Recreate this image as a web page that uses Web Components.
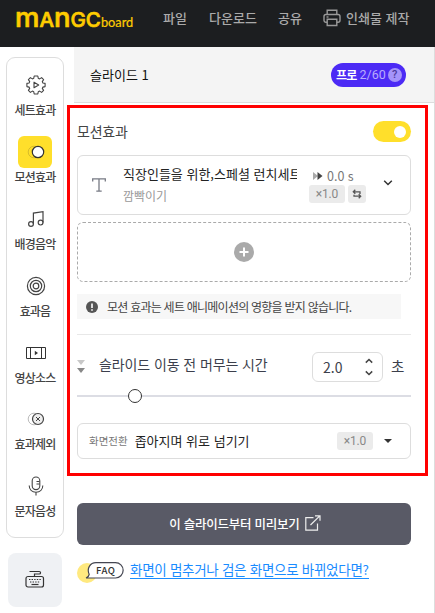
<!DOCTYPE html>
<html lang="ko">
<head>
<meta charset="utf-8">
<title>MANGOboard</title>
<style>
  body {
    margin: 0;
    width: 435px;
    height: 613px;
    overflow: hidden;
    background: #fff;
    color: #222;
    font-family: "Noto Sans CJK KR", sans-serif;
    font-size: 14px;
    line-height: 20px;
  }
</style>
</head>
<body>
<mango-app></mango-app>

<script>
// Shared rules: every shadow root starts from these.
const SHARED = `
  :host { display: block; box-sizing: border-box; }
  * { box-sizing: border-box; }
  svg { display: block; flex: none; }
  span { white-space: nowrap; }
`;

const ICONS = {
  gear: `<svg width="20" height="20" viewBox="0 0 20 20" fill="none" stroke="#444" stroke-width="1.1" stroke-linejoin="round"><path d="M8.200 1h3.600l.5 2.300 1.300.6 2-1.300 2 2-1.300 2 .6 1.400 2.200.4v3.200l-2.200.5-.6 1.300 1.300 2-2 2-2-1.300-1.300.6-.5 2.300H8.200l-.5-2.300-1.300-.6-2 1.300-2-2 1.300-2-.6-1.300-2.200-.5V8.400l2.200-.4.6-1.400-1.300-2 2-2 2 1.300 1.300-.6z"/><path d="M8 7.200v5.600l4.700-2.800z"/></svg>`,
  motion: `<svg width="18" height="14" viewBox="0 0 18 14"><circle cx="7" cy="7" r="5.800" fill="none" stroke="#cdb32a" stroke-width=".8"/><circle cx="11" cy="7" r="5.700" fill="#fff" stroke="#333" stroke-width="1.200"/></svg>`,
  music: `<svg width="18" height="18" viewBox="0 0 18 18" fill="none" stroke="#444" stroke-width="1.200"><circle cx="4" cy="14" r="2.400"/><circle cx="13.600" cy="12.600" r="2.400"/><path d="M6.400 14V3.100L16 1.700v10.900"/></svg>`,
  sound: `<svg width="20" height="20" viewBox="0 0 20 20" fill="none" stroke="#444" stroke-width="1.200"><circle cx="10" cy="10" r="8.600"/><circle cx="10" cy="10" r="5.700"/><circle cx="10" cy="10" r="2.800"/></svg>`,
  video: `<svg width="20" height="12" viewBox="0 0 20 12" fill="none" stroke="#333" stroke-width="1"><path d="M.5.5h19v11H.5zM4.500.5v11M15.500.5v11"/><path d="M8.800 3.800v4.400L12 6z" fill="#333" stroke="none"/></svg>`,
  exclude: `<svg width="18" height="14" viewBox="0 0 18 14" fill="none"><circle cx="7" cy="7" r="5.800" stroke="#bbb" stroke-width="1"/><circle cx="11" cy="7" r="5.500" fill="#eee" stroke="#444" stroke-width="1.200"/><path d="M9 5l4 4M13 5L9 9" stroke="#444"/></svg>`,
  mic: `<svg width="16" height="20" viewBox="0 0 16 20" fill="none" stroke="#444" stroke-width="1.100"><rect x="4.200" y="1" width="7.600" height="12.600" rx="3.800"/><path d="M1.200 9.500c0 4 2.800 6.700 6.800 6.700s6.800-2.700 6.800-6.700M8 16.200v3.300M8.500 5.500h3M8.500 8h3"/></svg>`,
  keyboard: `<svg width="20" height="20" viewBox="0 0 20 20" fill="none" stroke="#333" stroke-width="1.200"><path d="M4.500 1.500h9.700c1.800 0 1.800 2.500 0 2.500H9.500v2.500"/><rect x="1" y="6.500" width="17.500" height="10.500" rx="2"/><path d="M4 9.500h12M5 12h10" stroke-dasharray="1.400 1.200"/><path d="M6.500 14.500h7"/></svg>`,
  printer: `<svg width="18" height="18" viewBox="0 0 18 18" fill="none" stroke="#999" stroke-width="1.400"><path d="M4.200 5.500V1.200h9.600v4.300M4.200 13.200H3C1.800 13.200 1 12.400 1 11.200V7.500c0-1.200.8-2 2-2h12c1.200 0 2 .8 2 2v3.700c0 1.200-.8 2-2 2h-1.200"/><path d="M4.200 10.200h9.600v6.300H4.200z"/><path d="M3.500 8h2"/></svg>`,
  forward: `<svg width="10" height="8" viewBox="0 0 10 8"><path d="M0 0l5 4-5 4z" fill="#aaa"/><path d="M4.500 0l5 4-5 4z" fill="#444"/></svg>`,
  repeat: `<svg width="10" height="10" viewBox="0 0 10 10" fill="none" stroke="#555" stroke-width="1.300"><path d="M3.300.8L1.300 2.800l2 2M1.300 2.800H8v2.100M6.700 5.200l2 2-2 2M8.700 7.200H2V5.800"/></svg>`,
  chevron: `<svg width="10" height="6" viewBox="0 0 10 6" fill="none" stroke="#333" stroke-width="1.500"><path d="M1.200.8L5 4.500 8.800.8"/></svg>`,
  letter: `<svg width="14" height="14" viewBox="0 0 14 14" fill="none" stroke="#777a84" stroke-width="1.300"><path d="M.7 3.600V.8h12.600v2.800M7 .8v12.400M4.300 13.200h5.400"/></svg>`,
  plus: `<svg width="20" height="20" viewBox="0 0 20 20"><circle cx="10" cy="10" r="10" fill="#aaa"/><path d="M10 5.500v9M5.500 10h9" stroke="#fff" stroke-width="2"/></svg>`,
  alert: `<svg width="12" height="12" viewBox="0 0 12 12"><circle cx="6" cy="6" r="6" fill="#555"/><path d="M6 2.400v4.600M6 8.200v1.600" stroke="#fff" stroke-width="1.600"/></svg>`,
  dwell: `<svg width="8" height="14" viewBox="0 0 8 14"><path d="M0 0h8L4 5z" fill="#c8c8c8"/><path d="M0 8h8l-4 5z" fill="#888"/></svg>`,
  spin: `<svg width="8" height="18" viewBox="0 0 8 18" fill="none" stroke="#444" stroke-width="1.500"><path d="M.8 4.600L4 1.500l3.200 3.100M.8 13.400L4 16.500l3.200-3.100"/></svg>`,
  external: `<svg width="16" height="16" viewBox="0 0 16 16" fill="none" stroke="#eee" stroke-width="1.200"><path d="M8.500 2.700H.8v12.500h11.700V8.500M5.500 10L14.800.9M10 .8h5v5"/></svg>`,
};

function define(name, css, html) {
  customElements.define(name, class extends HTMLElement {
    constructor() {
      super();
      this.attachShadow({ mode: 'open' });
    }
    connectedCallback() {
      const markup = typeof html === 'function' ? html(this) : html;
      this.shadowRoot.innerHTML = `<style>${SHARED}${css}</style>${markup}`;
    }
  });
}

// --- <mango-icon name> -------------------------------------------------------
define('mango-icon', `:host { display: inline-block; flex: none; }`,
  (el) => ICONS[el.getAttribute('name')]);

// --- <mango-logo> — big letters, small suffix on the same baseline -----------
define('mango-logo', `
  :host {
    display: flex;
    align-items: baseline;
    width: 117px;
    padding-top: 3px;
    color: #fc0;
    font-family: Inter, sans-serif;
    font-weight: 500;
    line-height: 30px;
    -webkit-text-stroke: .7px #fc0;
    paint-order: stroke fill;
  }
  .low { font-size: 27.500px; text-transform: lowercase; }
  .cap { font-size: 20.500px; }
  .sub { font: 400 12.800px/30px Lato, sans-serif; -webkit-text-stroke: .2px #fc0; }
`, `<span class="low">M</span><span class="cap">A</span><span class="low">N</span><span class="cap">GC</span><span class="sub">board</span>`);

// --- <top-bar> ---------------------------------------------------------------
define('top-bar', `
  :host {
    display: flex;
    align-items: center;
    height: 47px;
    padding: 0 0 11px 15px;
    background: #1c1e20;
    color: #aaa;
    font-size: 13px;
    font-weight: 500;
  }
  nav { display: flex; align-items: center; margin-left: 31px; }
  .file { width: 46px; }
  .down { width: 69px; }
  .share { width: 45px; }
  .print { margin-left: 5px; }
`, `
  <mango-logo></mango-logo>
  <nav>
    <span class="file">파일</span><span class="down">다운로드</span><span class="share">공유</span>
    <mango-icon name="printer"></mango-icon><span class="print">인쇄물 제작</span>
  </nav>`);

// --- <side-item icon [active]> -----------------------------------------------
define('side-item', `
  :host {
    display: flex;
    flex-direction: column;
    align-items: center;
    height: 66.900px;
    color: #444;
    font-size: 12px;
    font-weight: 500;
    line-height: 18px;
    letter-spacing: -.8px;
  }
  .ico {
    display: flex;
    align-items: center;
    justify-content: center;
    width: 34px;
    height: 32px;
    padding-left: 2px;
    border-radius: 6px;
  }
  :host([active]) .ico { background: #ffdf2b; }
`, (el) => `<div class="ico"><mango-icon name="${el.getAttribute('icon')}"></mango-icon></div><span><slot></slot></span>`);

// --- <side-bar> --------------------------------------------------------------
define('side-bar', `
  :host { width: 74px; padding: 10px 0 0 6px; }
  .list {
    width: 58px;
    height: 481px;
    padding-top: 11px;
    border: 1px solid #ddd;
    border-radius: 9px;
  }
  .keys {
    display: flex;
    align-items: center;
    justify-content: center;
    width: 54px;
    height: 54px;
    margin: 15px 0 0 2px;
    border-radius: 8px;
    background: #eff1f4;
  }
`, `
  <div class="list">
    <side-item icon="gear">세트효과</side-item>
    <side-item icon="motion" active>모션효과</side-item>
    <side-item icon="music">배경음악</side-item>
    <side-item icon="sound">효과음</side-item>
    <side-item icon="video">영상소스</side-item>
    <side-item icon="exclude">효과제외</side-item>
    <side-item icon="mic">문자음성</side-item>
  </div>
  <div class="keys"><mango-icon name="keyboard"></mango-icon></div>`);

// --- <slide-head> ------------------------------------------------------------
define('slide-head', `
  :host {
    display: flex;
    align-items: center;
    justify-content: space-between;
    height: 56px;
    padding: 0 28px 0 16px;
    border-bottom: 1px solid #ddd;
    background: #f4f4f4;
    color: #111;
    font-size: 13px;
  }
  .plan {
    display: flex;
    align-items: center;
    width: 75px;
    height: 24px;
    padding-left: 5px;
    border-radius: 12px;
    background: #4c2af5;
    color: #b9acfc;
    font-size: 12px;
  }
  b { color: #fff; font-size: 12px; letter-spacing: -.8px; }
  .n { margin-left: 3px; font-family: Roboto, sans-serif; font-size: 12.500px; }
  .q {
    width: 14px;
    height: 14px;
    margin-left: 2px;
    border-radius: 50%;
    background: #a594fa;
    color: #4d3b9c;
    font: 500 11px/14px Roboto, sans-serif;
    text-align: center;
  }
`, `<span><slot></slot></span><div class="plan"><b>프로</b><span class="n">2/60</span><span class="q">?</span></div>`);

// --- <rate-chip> -------------------------------------------------------------
define('rate-chip', `
  :host {
    display: flex;
    align-items: center;
    justify-content: center;
    width: 36px;
    height: 18px;
    border-radius: 3px;
    background: #ebebeb;
    color: #888;
    font-family: Roboto, sans-serif;
    font-size: 12px;
    letter-spacing: -.2px;
  }
`, `<span><slot></slot></span>`);

// --- <toggle-switch> ---------------------------------------------------------
define('toggle-switch', `
  :host {
    display: flex;
    align-items: center;
    justify-content: flex-end;
    width: 38px;
    height: 21px;
    padding-right: 5px;
    border-radius: 11px;
    background: #ffdf2b;
  }
  .knob { width: 12px; height: 12px; border-radius: 50%; background: #fff; }
`, `<div class="knob"></div>`);

// --- <motion-card> -----------------------------------------------------------
define('motion-card', `
  :host {
    display: flex;
    height: 60px;
    border: 1px solid #ddd;
    border-radius: 6px;
  }
  .type { margin: 22px 0 0 14px; }
  .text { width: 174px; margin: 8px 0 0 17px; overflow: hidden; color: #222; font-size: 13px; }
  .name { display: block; }
  .sub { display: block; margin-top: 2px; color: #999; font-size: 12px; }
  .rate { width: 57px; margin: 11px 0 0 12px; color: #777; }
  .time { display: flex; align-items: center; gap: 4px; height: 18px; padding-left: 4px; font-size: 12.500px; }
  .chips { display: flex; gap: 3px; }
  .loop {
    display: flex;
    align-items: center;
    justify-content: center;
    width: 18px;
    height: 18px;
    border-radius: 3px;
    background: #ebebeb;
  }
  .open { margin: 24px 0 0 17px; }
`, `
  <mango-icon class="type" name="letter"></mango-icon>
  <div class="text"><span class="name"><slot></slot></span><span class="sub"><slot name="effect"></slot></span></div>
  <div class="rate">
    <div class="time"><mango-icon name="forward"></mango-icon><span>0.0 s</span></div>
    <div class="chips"><rate-chip>×1.0</rate-chip><div class="loop"><mango-icon name="repeat"></mango-icon></div></div>
  </div>
  <mango-icon class="open" name="chevron"></mango-icon>`);

// --- <dwell-time> — stepper and slider for the pause before the next slide ---
define('dwell-time', `
  :host { margin-top: 15px; border-top: 1px solid #e8e8e8; padding-top: 17px; }
  .row { display: flex; align-items: center; height: 30px; color: #3c3f4c; font-size: 14px; }
  .label { flex: 1; margin: -7px 0 0 14px; letter-spacing: -.1px; }
  .field {
    display: flex;
    align-items: center;
    justify-content: space-between;
    width: 71px;
    height: 30px;
    padding: 0 9px 0 10px;
    border: 1px solid #ddd;
    border-radius: 6px;
  }
  .unit { width: 28px; margin-top: -2px; padding-left: 8px; font-size: 14.500px; }
  .slider {
    display: flex;
    align-items: center;
    height: 16px;
    margin-top: 6px;
    background: linear-gradient(#dcdde4, #dcdde4) center / 100% 2px no-repeat;
  }
  .knob {
    width: 14px;
    height: 14px;
    margin-left: 51px;
    border: 1px solid #333;
    border-radius: 50%;
    background: #fff;
  }
`, `
  <div class="row">
    <mango-icon name="dwell"></mango-icon>
    <span class="label"><slot></slot></span>
    <div class="field"><span>2.0</span><mango-icon name="spin"></mango-icon></div>
    <span class="unit">초</span>
  </div>
  <div class="slider"><div class="knob"></div></div>`);

// --- <transition-select> -----------------------------------------------------
define('transition-select', `
  :host {
    display: flex;
    align-items: center;
    height: 36px;
    margin-top: 19px;
    padding: 0 18px 0 11px;
    border: 1px solid #ddd;
    border-radius: 6px;
    font-size: 13px;
  }
  .key { color: #777; font-size: 10.500px; }
  .val { flex: 1; margin: -1px 0 0 7px; }
  .caret {
    margin-left: 11px;
    border: 4px solid transparent;
    border-top: 4px solid #333;
    border-bottom: 0;
  }
`, `<span class="key">화면전환</span><span class="val"><slot></slot></span><rate-chip>×1.0</rate-chip><div class="caret"></div>`);

// --- <effect-panel> ----------------------------------------------------------
define('effect-panel', `
  :host { padding: 18px 23px 0 3px; }
  .head { display: flex; align-items: center; justify-content: space-between; height: 21px; color: #444; font-size: 14px; }
  .head span { margin-top: -2px; letter-spacing: -.2px; }
  motion-card { margin-top: 13px; }
  .add {
    display: flex;
    align-items: center;
    justify-content: center;
    height: 60px;
    margin-top: 7px;
    border: 1px dashed #aaa;
    border-radius: 6px;
  }
  .note {
    display: flex;
    align-items: center;
    gap: 9px;
    width: 324px;
    height: 25px;
    margin-top: 12px;
    padding-left: 9px;
    background: #f7f7f7;
    color: #444;
    font-size: 12px;
    letter-spacing: -.76px;
  }
`, `
  <div class="head"><span>모션효과</span><toggle-switch></toggle-switch></div>
  <motion-card>직장인들을 위한,스페셜 런치세트<span slot="effect">깜빡이기</span></motion-card>
  <div class="add"><mango-icon name="plus"></mango-icon></div>
  <div class="note"><mango-icon name="alert"></mango-icon><span>모션 효과는 세트 애니메이션의 영향을 받지 않습니다.</span></div>
  <dwell-time>슬라이드 이동 전 머무는 시간</dwell-time>
  <transition-select>좁아지며 위로 넘기기</transition-select>`);

// --- <panel-foot> ------------------------------------------------------------
define('panel-foot', `
  :host { padding: 44px 23px 0 3px; }
  .preview {
    display: flex;
    align-items: center;
    justify-content: center;
    gap: 5px;
    height: 42px;
    padding-left: 2px;
    border-radius: 6px;
    background: #595a66;
    color: #fff;
    font-size: 12.500px;
    font-weight: 500;
    letter-spacing: -.25px;
  }
  .preview mango-icon { margin-top: -3px; }
  .faq { display: flex; align-items: flex-start; margin-top: 15px; }
  a {
    margin-left: 6px;
    border-bottom: 1px solid #1a8cff;
    color: #1a8cff;
    font-size: 13.500px;
    letter-spacing: -.28px;
    line-height: 18px;
  }
`, `
  <div class="preview"><span>이 슬라이드부터 미리보기</span><mango-icon name="external"></mango-icon></div>
  <div class="faq">
    <svg width="47" height="24" viewBox="0 0 47 24">
      <circle cx="10" cy="13" r="10" fill="#ffe97f"/>
      <path d="M19 2.700h19.500a7.600 7.600 0 0 1 0 15.300H9c2.200-.8 3-2 3.200-3.600C9.500 8.500 13 2.700 19 2.700z" fill="#fff" stroke="#444652" stroke-width="1.200"/>
      <text x="19" y="14" font-family="Noto Sans CJK KR, sans-serif" font-size="9.500" font-weight="500" fill="#333" textLength="19">FAQ</text>
    </svg>
    <a><span>화면이 멈추거나 검은 화면으로 바뀌었다면?</span></a>
  </div>`);

// --- <mango-app> -------------------------------------------------------------
define('mango-app', `
  :host { position: relative; height: 613px; }
  .body { display: flex; height: 566px; }
  main { width: 361px; border-right: 1px solid #ddd; }
  /* highlight frame laid over the panel */
  .frame {
    position: absolute;
    left: 67px;
    top: 105px;
    width: 361px;
    height: 371px;
    border: 3px solid #f00;
  }
`, `
  <top-bar></top-bar>
  <div class="body">
    <side-bar></side-bar>
    <main>
      <slide-head>슬라이드 1</slide-head>
      <effect-panel></effect-panel>
      <panel-foot></panel-foot>
    </main>
  </div>
  <div class="frame"></div>`);
</script>
</body>
</html>
